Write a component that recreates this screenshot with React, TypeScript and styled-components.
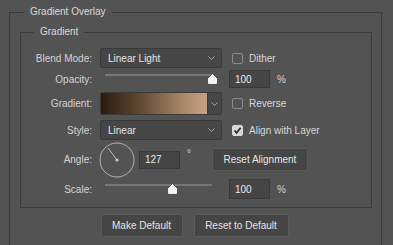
import React from "react";
import styled, { createGlobalStyle } from "styled-components";

const Global = createGlobalStyle`
  html, body { margin: 0; padding: 0; background: #535353; }
  body { font-family: "Liberation Sans", Arial, sans-serif; font-size: 10px; color: #d8d8d8; width: 393px; height: 245px; overflow: hidden; }
  * { box-sizing: border-box; }
`;

const Outer = styled.fieldset`
  margin: 5px 11px 0 9px;
  padding: 6px 9px 20px 10px;
  border: 1px solid #3c3c3c;
  border-radius: 0;
  min-width: 0;
`;

const Legend = styled.legend<{ $ml: number }>`
  margin-left: ${(p) => p.$ml}px;
  padding: 0 6px;
  line-height: 14px;
  height: 14px;
  font-size: 10px;
  color: #dadada;
`;

const Inner = styled.fieldset`
  margin: 0;
  padding: 9px 0 8px 0;
  border: 1px solid #3c3c3c;
  min-width: 0;
`;

const Row = styled.div<{ $h: number; $mt: number }>`
  display: flex;
  align-items: center;
  height: ${(p) => p.$h}px;
  margin-top: ${(p) => p.$mt}px;
`;

const Label = styled.div`
  width: 71px;
  text-align: right;
  margin-right: 8px;
  color: #d4d4d4;
  white-space: nowrap;
`;

const SelectBox = styled.div`
  width: 122px;
  height: 20px;
  background: #464646;
  border: 1px solid #3a3a3a;
  border-radius: 2px;
  display: flex;
  align-items: center;
  padding: 0 6px 0 7px;
  color: #e6e6e6;
  justify-content: space-between;
`;

const CheckWrap = styled.label`
  display: flex;
  align-items: center;
  margin-left: 10px;
  color: #d8d8d8;
  gap: 6px;
`;

const Box = styled.span<{ $on?: boolean }>`
  width: 11px;
  height: 11px;
  border-radius: 2px;
  border: 1px solid ${(p) => (p.$on ? "#d8d8d8" : "#8a8a8a")};
  background: ${(p) => (p.$on ? "#d8d8d8" : "transparent")};
  display: flex;
  align-items: center;
  justify-content: center;
`;

const SliderBox = styled.div`
  position: relative;
  width: 107px;
  height: 14px;
  margin-left: 5px;
  margin-right: 17px;
`;

const Track = styled.div`
  position: absolute;
  left: 0;
  right: 0;
  top: 2px;
  height: 2px;
  background: #767676;
`;

const Thumb = styled.svg`
  position: absolute;
  top: 1px;
`;

const NumInput = styled.div<{ $h?: number }>`
  width: 41px;
  height: ${(p) => p.$h ?? 18}px;
  background: #454545;
  border: 1px solid #3a3a3a;
  color: #e8e8e8;
  display: flex;
  align-items: center;
  padding-left: 5px;
`;

const Unit = styled.span<{ $up?: boolean }>`
  margin-left: 7px;
  color: #d4d4d4;
  align-self: ${(p) => (p.$up ? "flex-start" : "center")};
  margin-top: ${(p) => (p.$up ? "6px" : "0")};
`;

const GradientCtl = styled.div`
  display: flex;
  width: 122px;
  height: 23px;
  border: 1px solid #3a3a3a;
  border-radius: 2px;
  overflow: hidden;
`;

const GradientBar = styled.div`
  flex: 1;
  background: linear-gradient(to right, #2a1c10 0%, #5e4530 35%, #a58566 75%, #c6a384 100%);
`;

const GradientDrop = styled.div`
  width: 14px;
  background: #464646;
  display: flex;
  align-items: center;
  justify-content: center;
  border-left: 1px solid #3a3a3a;
`;

const Dial = styled.svg`
  margin-left: -1px;
  margin-right: 4px;
`;

const Button = styled.div<{ $w: number }>`
  width: ${(p) => p.$w}px;
  height: 23px;
  background: #454545;
  border: 1px solid #5b5b5b;
  border-radius: 2px;
  display: flex;
  align-items: center;
  justify-content: center;
  color: #e4e4e4;
`;

const ResetBtnSlot = styled.div`
  margin-left: 21px;
`;

const Footer = styled.div`
  display: flex;
  justify-content: center;
  gap: 11px;
  margin-top: 6px;
  padding-right: 3px;
`;

const Chevron = () => (
  <svg width="7" height="4" viewBox="0 0 7 4">
    <path d="M0.5 0.5 L3.5 3.5 L6.5 0.5" fill="none" stroke="#a8a8a8" strokeWidth="1" />
  </svg>
);

const Check = ({ on, label }: { on?: boolean; label: string }) => (
  <CheckWrap>
    <Box $on={on}>
      {on && (
        <svg width="9" height="9" viewBox="0 0 9 9">
          <path d="M1.5 4.5 L3.6 6.8 L7.6 1.8" fill="none" stroke="#2e2e2e" strokeWidth="1.8" />
        </svg>
      )}
    </Box>
    {label}
  </CheckWrap>
);

const Slider = ({ pos }: { pos: number }) => (
  <SliderBox>
    <Track />
    <Thumb width="11" height="12" viewBox="0 0 11 12" style={{ left: pos - 5.5 }}>
      <path d="M5.5 0.5 L10.5 5.5 L10.5 10 Q10.5 11.5 9 11.5 L2 11.5 Q0.5 11.5 0.5 10 L0.5 5.5 Z" fill="#f2f2f2" stroke="#3a3a3a" strokeWidth="0.8" />
    </Thumb>
  </SliderBox>
);

export default function App() {
  const a = (127 * Math.PI) / 180;
  const ex = 18 + 15 * Math.cos(a);
  const ey = 18 - 15 * Math.sin(a);
  return (
    <>
      <Global />
      <Outer>
        <Legend $ml={4}>Gradient Overlay</Legend>
        <Inner>
          <Legend $ml={13}>Gradient</Legend>
          <Row $h={20} $mt={0}>
            <Label>Blend Mode:</Label>
            <SelectBox>
              Linear Light
              <Chevron />
            </SelectBox>
            <Check label="Dither" />
          </Row>
          <Row $h={18} $mt={2}>
            <Label>Opacity:</Label>
            <Slider pos={107} />
            <NumInput>100</NumInput>
            <Unit>%</Unit>
          </Row>
          <Row $h={23} $mt={4}>
            <Label>Gradient:</Label>
            <GradientCtl>
              <GradientBar />
              <GradientDrop>
                <Chevron />
              </GradientDrop>
            </GradientCtl>
            <Check label="Reverse" />
          </Row>
          <Row $h={20} $mt={5}>
            <Label>Style:</Label>
            <SelectBox>
              Linear
              <Chevron />
            </SelectBox>
            <Check on label="Align with Layer" />
          </Row>
          <Row $h={35} $mt={2}>
            <Label>Angle:</Label>
            <Dial width="36" height="36" viewBox="0 0 36 36">
              <circle cx="18" cy="18" r="17" fill="none" stroke="#b4b4b4" strokeWidth="1" />
              <line x1="18" y1="18" x2={ex} y2={ey} stroke="#c4c4c4" strokeWidth="1" />
              <circle cx="18" cy="18" r="1.6" fill="#c8c8c8" />
            </Dial>
            <NumInput $h={18}>127</NumInput>
            <Unit $up>°</Unit>
            <ResetBtnSlot>
              <Button $w={96}>Reset Alignment</Button>
            </ResetBtnSlot>
          </Row>
          <Row $h={20} $mt={2}>
            <Label>Scale:</Label>
            <Slider pos={67} />
            <NumInput $h={20}>100</NumInput>
            <Unit>%</Unit>
          </Row>
        </Inner>
        <Footer>
          <Button $w={82}>Make Default</Button>
          <Button $w={95}>Reset to Default</Button>
        </Footer>
      </Outer>
    </>
  );
}
